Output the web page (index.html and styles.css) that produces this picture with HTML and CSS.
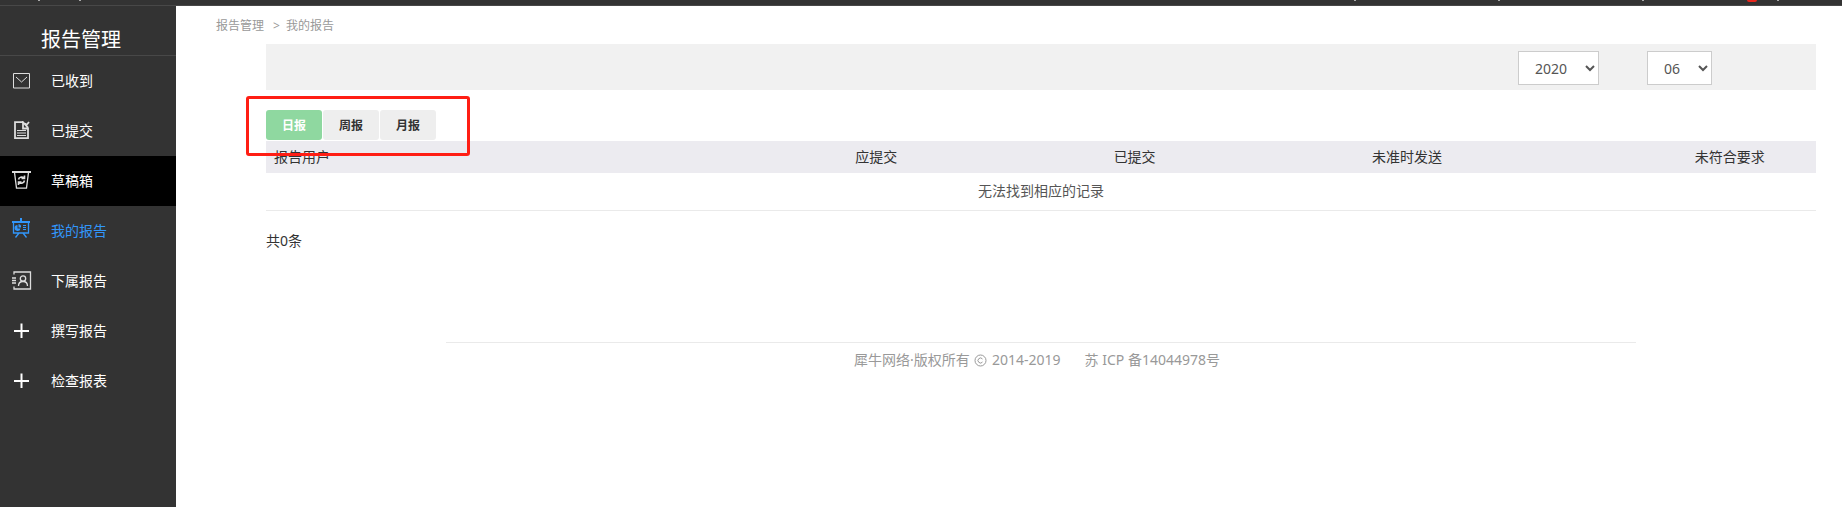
FILE: index.html
```html
<!DOCTYPE html>
<html lang="zh-CN">
<head>
    <meta charset="UTF-8">
    <meta name="viewport" content="width=device-width, initial-scale=1.0">
    <title>我的报告</title>
    <link rel="stylesheet" href="styles.css">
</head>
<body>
    <header class="topbar">
        <span class="tick first"></span>
        <span class="tick"></span>
        <span class="tick push"></span>
        <span class="tick"></span>
        <span class="tick"></span>
        <span class="dot"></span>
        <span class="tick"></span>
    </header>
    <div class="layout">
        <nav class="sidebar">
            <h1>报告管理</h1>
            <ul class="menu">
                <li><a href="#">
                    <svg class="icon" viewBox="0 0 20 20"><path d="M1.500 2.500h16v14.500h-16zM4 6l5.500 5L15 6"/></svg>
                    已收到
                </a></li>
                <li><a href="#">
                    <svg class="icon" viewBox="0 0 20 20"><path stroke-width="1.800" d="M11 1.200H3v16h13V7.500h-5V1.200l5 5.500M13 2.500l1.500 1.500L17 1"/><path d="M5 9.500h9M5 12h9M5 14.500h9"/></svg>
                    已提交
                </a></li>
                <li class="hover"><a href="#">
                    <svg class="icon" viewBox="0 0 20 20"><path stroke-width="2" d="M0 1h19"/><path stroke-width="1.300" d="M2.500 1.500l2 15.700h10l2-15.700"/><path stroke-width="1.600" d="M6.500 8.500C7 6 10 5.500 12 7M12.500 4.500V7.500H9.500M12.500 9.500C12 12 9 13 7 11.500M6.500 14V11H9.500"/></svg>
                    草稿箱
                </a></li>
                <li class="active"><a href="#">
                    <svg class="icon" viewBox="0 0 20 20"><path stroke-width="2" d="M0 4h18M9 0v4"/><path stroke-width="1.300" d="M1.500 4v11h15V4M7 15l-3.500 4.500M11 15l3.500 4.500"/><path class="solid" d="M5.500 7v3.500h3a3 3 0 1 1-3-3.500z"/><path class="solid" d="M6.500 6a3 3 0 0 1 2.500 3.500h-2.500z"/><path d="M11 7.500h3M11 9.500h3M11 11.500h3"/></svg>
                    我的报告
                </a></li>
                <li><a href="#">
                    <svg class="icon" viewBox="0 0 20 20"><path stroke-width="1.300" d="M2 3.500V1h16.500v17H2v-2.500M0 7h4M0 9.500h4M0 12h4"/><circle stroke-width="1.300" cx="11" cy="7.500" r="2.700"/><path stroke-width="1.300" d="M6.500 15c0-3 2-4.500 4.500-4.500s4.500 1.500 4.500 4.500"/></svg>
                    下属报告
                </a></li>
                <li><a href="#">
                    <svg class="icon" viewBox="0 0 20 20"><path class="plus" d="M9.500 2.500v14.500M2 10h15"/></svg>
                    撰写报告
                </a></li>
                <li><a href="#">
                    <svg class="icon" viewBox="0 0 20 20"><path class="plus" d="M9.500 2.500v14.500M2 10h15"/></svg>
                    检查报表
                </a></li>
            </ul>
        </nav>
        <main class="content">
            <div class="breadcrumb">
                <a href="#">报告管理</a>
                <span class="sep">&gt;</span>
                <a href="#">我的报告</a>
            </div>
            <div class="panel">
                <form class="filter">
                    <select class="year" aria-label="年份">
                        <option>2019</option>
                        <option selected>2020</option>
                    </select>
                    <select class="month" aria-label="月份">
                        <option>05</option>
                        <option selected>06</option>
                    </select>
                </form>
                <div class="tabs">
                    <button type="button" class="on">日报</button>
                    <button type="button">周报</button>
                    <button type="button">月报</button>
                    <div class="marker"></div>
                </div>
                <table class="report">
                    <thead>
                        <tr>
                            <th class="user">报告用户</th>
                            <th class="count">应提交</th>
                            <th class="count">已提交</th>
                            <th class="late">未准时发送</th>
                            <th>未符合要求</th>
                        </tr>
                    </thead>
                    <tbody>
                        <tr>
                            <td colspan="5">无法找到相应的记录</td>
                        </tr>
                    </tbody>
                </table>
                <p class="total">共0条</p>
            </div>
            <footer class="footer">
                <span>犀牛网络·版权所有 <svg class="copy" viewBox="0 0 13 13"><circle cx="6.500" cy="6.500" r="5.500"/><path d="M8.500 5a2.500 2.500 0 1 0 0 3"/></svg> 2014-2019</span>
                <span>苏 ICP 备14044978号</span>
            </footer>
        </main>
    </div>
</body>
</html>
```

FILE: styles.css
```css
* {
    box-sizing: border-box;
}
body {
    margin: 0;
    min-height: 100vh;
    display: flex;
    flex-direction: column;
    font-family: "Noto Sans", "Noto Sans CJK SC", sans-serif;
    font-size: 14px;
    line-height: 20px;
    color: #333;
    background-color: #fff;
}
a {
    color: inherit;
    text-decoration: none;
}
.topbar {
    display: flex;
    align-items: flex-start;
    height: 6px;
    padding: 0 63px 0 38px;
    background-color: #333;
    border-bottom: 1px solid #484848;
    overflow: hidden;
}
.tick {
    width: 2px;
    height: 1px;
    margin-right: 142px;
    background-color: #aaa;
}
.tick.first {
    margin-right: 39px;
}
.tick.push {
    margin-left: auto;
}
.tick:last-child {
    margin-right: 0;
}
.dot {
    width: 10px;
    height: 2px;
    margin: 0 20px 0 -39px;
    border-radius: 0 0 5px 5px;
    background-color: #e8261c;
}
.layout {
    flex: 1;
    display: flex;
}
/* Sidebar */
.sidebar {
    flex: none;
    width: 176px;
    background-color: #333;
    color: #fff;
}
.sidebar h1 {
    margin: 0;
    height: 50px;
    padding: 19px 14px 0 0;
    border-bottom: 1px solid #484848;
    font-size: 20px;
    line-height: 30px;
    font-weight: 400;
    text-align: center;
}
.menu {
    margin: 0;
    padding: 0;
    list-style: none;
}
.menu a {
    display: flex;
    align-items: center;
    gap: 19px;
    height: 50px;
    padding-left: 12px;
}
.menu .hover {
    background-color: #000;
}
.menu .active {
    color: #3296fa;
}
.icon {
    width: 20px;
    height: 20px;
    fill: none;
    stroke: #ddd;
}
.active .icon {
    margin-bottom: 6px;
    stroke: #3296fa;
}
.icon .solid {
    fill: #3296fa;
    stroke: none;
}
.icon .plus {
    stroke: #fff;
    stroke-width: 2;
}
/* Content */
.content {
    flex: 1;
    padding: 10px 26px 0 40px;
}
.breadcrumb {
    display: flex;
    gap: 6px;
    height: 28px;
    font-size: 12px;
    color: #999;
}
.breadcrumb .sep {
    padding-left: 3px;
}
.panel {
    margin-left: 50px;
}
.filter {
    display: flex;
    justify-content: flex-end;
    align-items: center;
    gap: 48px;
    height: 46px;
    padding: 2px 104px 0 0;
    background-color: #f1f1f1;
}
.filter select {
    height: 34px;
    padding: 0 0 0 12px;
    border: 1px solid #ccc;
    border-radius: 0;
    background-color: #fff;
    color: #555;
    font-family: inherit;
    font-size: 14px;
}
.filter .year {
    width: 81px;
}
.filter .month {
    width: 65px;
}
.tabs {
    position: relative;
    display: flex;
    gap: 1px;
    margin: 20px 0 1px;
}
.tabs button {
    width: 56px;
    height: 30px;
    padding: 0;
    border: none;
    border-radius: 3px;
    background-color: #eee;
    color: #333;
    font-family: inherit;
    font-size: 12px;
    font-weight: 700;
    cursor: pointer;
}
.tabs .on {
    background-color: #8fd8a0;
    color: #fff;
}
/* Red frame around the tabs */
.marker {
    position: absolute;
    top: -14px;
    left: -20px;
    width: 224px;
    height: 60px;
    border: 3px solid #ff1e14;
    border-radius: 3px;
    pointer-events: none;
}
.report {
    width: 100%;
    table-layout: fixed;
    border-collapse: collapse;
}
.report th {
    height: 32px;
    padding: 0 8px;
    background-color: #ecebf0;
    font-weight: 400;
    text-align: left;
}
.report td {
    height: 37px;
    padding: 0;
    border-bottom: 1px solid #eaeaea;
    color: #555;
    text-align: center;
}
.report .user {
    width: 37.5%;
}
.report .count {
    width: 16.67%;
}
.report .late {
    width: 20.83%;
}
.total {
    margin: 20px 0 0;
}
.footer {
    display: flex;
    justify-content: center;
    gap: 24px;
    margin: 91px 180px 0 230px;
    padding: 7px 8px 0 0;
    border-top: 1px solid #eaeaea;
    color: #999;
}
.copy {
    width: 13px;
    height: 13px;
    margin: 0 1px;
    fill: none;
    stroke: #999;
    vertical-align: -2px;
}
```
